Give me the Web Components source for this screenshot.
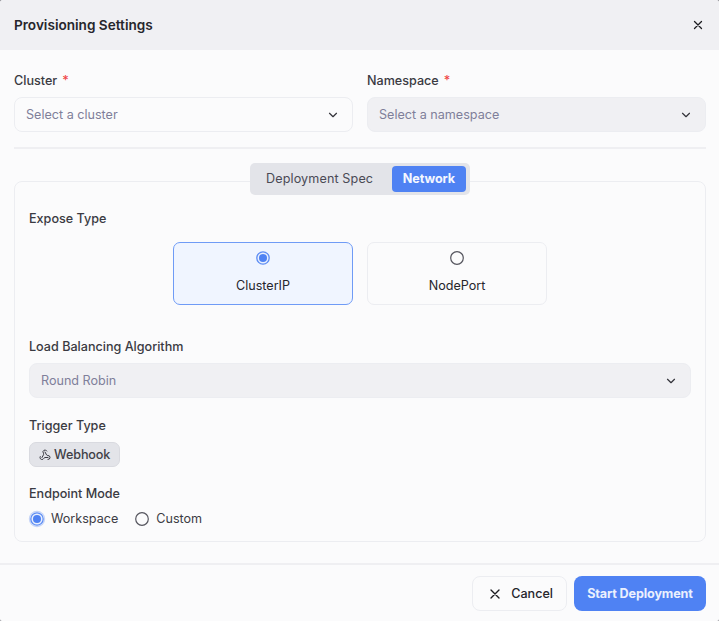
<!DOCTYPE html>
<html>
<head>
<meta charset="utf-8">
<title>Provisioning Settings</title>
<style>
    html, body { margin: 0; padding: 0; background: #8f8f94; }
    body { font-family: Inter, "Liberation Sans", sans-serif; color: #26262c; width: 719px; height: 621px; overflow: hidden; }
</style>
</head>
<body>
<prov-dialog heading="Provisioning Settings">
    <div slot="top" style="display:grid;grid-template-columns:339px 339px;column-gap:14px">
        <prov-select label="Cluster" required placeholder="Select a cluster"></prov-select>
        <prov-select label="Namespace" required disabled placeholder="Select a namespace"></prov-select>
    </div>
    <prov-tabs>
        <prov-field label="Expose Type" gap="15" style="margin-bottom:33px">
            <div style="display:flex;justify-content:center;gap:14px">
                <prov-option-card label="ClusterIP" checked></prov-option-card>
                <prov-option-card label="NodePort"></prov-option-card>
            </div>
        </prov-field>
        <prov-select label="Load Balancing Algorithm" disabled value="Round Robin" style="margin-bottom:19px"></prov-select>
        <prov-field label="Trigger Type" gap="8" style="margin-bottom:18px">
            <prov-chip>Webhook</prov-chip>
        </prov-field>
        <prov-field label="Endpoint Mode" gap="9">
            <div style="display:flex;gap:16px">
                <prov-radio label="Workspace" checked></prov-radio>
                <prov-radio label="Custom"></prov-radio>
            </div>
        </prov-field>
    </prov-tabs>
    <prov-button slot="footer" icon>Cancel</prov-button>
    <prov-button slot="footer" primary>Start Deployment</prov-button>
</prov-dialog>

<script>
// Provisioning dialog components

const X_ICON = '<path d="M18 6 6 18M6 6l12 12"/>';
const CHEVRON_ICON = '<path d="m6 9 6 6 6-6"/>';

class ProvDialog extends HTMLElement {
    constructor() {
        super();
        this.attachShadow({ mode: 'open' });
    }

    connectedCallback() {
        this.shadowRoot.innerHTML = `
            <style>
                :host { display: flex; flex-direction: column; width: 719px; height: 621px; background: #fbfbfc; border-radius: 3px 3px 2px 2px; overflow: hidden; }
                header { height: 50px; flex: none; box-sizing: border-box; padding: 0 14px; background: #f0f0f3; display: flex; align-items: center; justify-content: space-between; }
                h2 { margin: 0; font-size: 13.6px; font-weight: 600; color: #26262c; line-height: 50px; }
                header svg { width: 14px; height: 14px; fill: none; stroke: #1c1c20; stroke-width: 2.2; stroke-linecap: round; stroke-linejoin: round; }
                .body { flex: 1; box-sizing: border-box; padding: 22px 13px 0 14px; }
                .top { padding-bottom: 15px; border-bottom: 2px solid #efeff2; margin-bottom: 14px; }
                footer { height: 58px; flex: none; box-sizing: border-box; border-top: 2px solid #efeff2; padding: 11px 13px 0; display: flex; justify-content: flex-end; gap: 7px; }
            </style>
            <header>
                <h2>${this.getAttribute('heading')}</h2>
                <svg viewBox="0 0 24 24">${X_ICON}</svg>
            </header>
            <div class="body">
                <div class="top"><slot name="top"></slot></div>
                <slot></slot>
            </div>
            <footer><slot name="footer"></slot></footer>
        `;
    }
}

class ProvField extends HTMLElement {
    constructor() {
        super();
        this.attachShadow({ mode: 'open' });
    }

    connectedCallback() {
        const gap = this.getAttribute('gap') || '8';
        this.shadowRoot.innerHTML = `
            <style>
                :host { display: block; }
                label { display: block; font-size: 12.6px; font-weight: 500; line-height: 16px; padding-top: 1px; color: #3a3a42; margin-bottom: ${gap}px; }
            </style>
            <label>${this.getAttribute('label')}</label>
            <slot></slot>
        `;
    }
}

class ProvSelect extends HTMLElement {
    constructor() {
        super();
        this.attachShadow({ mode: 'open' });
    }

    connectedCallback() {
        const disabled = this.hasAttribute('disabled');
        const star = this.hasAttribute('required') ? '<span class="req">*</span>' : '';
        this.shadowRoot.innerHTML = `
            <style>
                :host { display: block; }
                label { display: block; font-size: 12.6px; font-weight: 500; line-height: 16px; padding-top: 1px; color: #3a3a42; margin-bottom: 8px; }
                .req { color: #ef4444; margin-left: 5px; }
                .box { height: 35px; box-sizing: border-box; border: 1.5px solid #ecedf1; border-radius: 8px; padding: 0 11px; display: flex; align-items: center; justify-content: space-between; background: ${disabled ? '#f0f0f3' : '#fbfbfc'}; font-size: 12.6px; color: #7f7f9a; }
                svg { width: 14px; height: 14px; fill: none; stroke: #33333a; stroke-width: 2; stroke-linecap: round; stroke-linejoin: round; margin-right: 1px; }
            </style>
            <label>${this.getAttribute('label')}${star}</label>
            <div class="box">
                <span>${this.getAttribute('placeholder') || this.getAttribute('value')}</span>
                <svg viewBox="0 0 24 24">${CHEVRON_ICON}</svg>
            </div>
        `;
    }
}

class ProvTabs extends HTMLElement {
    constructor() {
        super();
        this.attachShadow({ mode: 'open' });
    }

    connectedCallback() {
        this.shadowRoot.innerHTML = `
            <style>
                :host { display: block; }
                .bar { display: flex; justify-content: center; position: relative; z-index: 1; height: 32px; margin-bottom: -14px; }
                .tabs { display: flex; align-items: center; justify-content: space-between; box-sizing: border-box; width: 220px; height: 32px; padding: 3px 4px 3px 16px; background: #e3e4e9; border-radius: 5px; font-size: 12.6px; }
                .tab { height: 26px; line-height: 26px; color: #4a4a55; letter-spacing: 0.12px; }
                .tab.on { background: #4f82f3; color: #f4f7ff; border-radius: 4px; font-weight: 700; letter-spacing: -0.1px; padding: 0 11px; }
                .panel { border: 1.5px solid #ecedf1; border-radius: 8px; box-sizing: border-box; height: 361px; padding: 28px 14px 0; }
            </style>
            <div class="bar">
                <div class="tabs">
                    <div class="tab">Deployment Spec</div>
                    <div class="tab on">Network</div>
                </div>
            </div>
            <div class="panel"><slot></slot></div>
        `;
    }
}

class ProvOptionCard extends HTMLElement {
    constructor() {
        super();
        this.attachShadow({ mode: 'open' });
    }

    connectedCallback() {
        const checked = this.hasAttribute('checked');
        this.shadowRoot.innerHTML = `
            <style>
                :host { display: block; }
                .card { width: 180px; height: 63px; box-sizing: border-box; border: 1.5px solid ${checked ? '#6f9bf6' : '#ecedf1'}; border-radius: 7px; background: ${checked ? '#f0f5ff' : '#fbfbfc'}; display: flex; flex-direction: column; align-items: center; padding-top: 8px; font-size: 12.6px; color: #26262c; }
                prov-dot { margin-bottom: 13px; }
            </style>
            <div class="card">
                <prov-dot ${checked ? 'checked' : ''}></prov-dot>
                <span>${this.getAttribute('label')}</span>
            </div>
        `;
    }
}

class ProvDot extends HTMLElement {
    constructor() {
        super();
        this.attachShadow({ mode: 'open' });
    }

    connectedCallback() {
        const checked = this.hasAttribute('checked');
        this.shadowRoot.innerHTML = `
            <style>
                :host { display: block; width: 14px; height: 14px; }
                svg { display: block; }
            </style>
            <svg width="14" height="14" viewBox="0 0 14 14">
                ${checked
                    ? '<circle cx="7" cy="7" r="6.2" fill="#e9effd" stroke="#5c8cf4" stroke-width="1.3"/><circle cx="7" cy="7" r="4" fill="#4f82f3"/>'
                    : '<circle cx="7" cy="7" r="6.3" fill="#fbfbfc" stroke="#55555e" stroke-width="1.2"/>'}
            </svg>
        `;
    }
}

class ProvRadio extends HTMLElement {
    constructor() {
        super();
        this.attachShadow({ mode: 'open' });
    }

    connectedCallback() {
        const checked = this.hasAttribute('checked');
        this.shadowRoot.innerHTML = `
            <style>
                :host { display: block; }
                .row { display: flex; align-items: center; gap: 7px; font-size: 12.6px; color: #3c3c44; line-height: 16px; }
                prov-dot { margin-left: 1px; border-radius: 50%; ${checked ? 'box-shadow: 0 0 0 1.2px #c6d5f7;' : ''} }
            </style>
            <div class="row">
                <prov-dot ${checked ? 'checked' : ''}></prov-dot>
                <span>${this.getAttribute('label')}</span>
            </div>
        `;
    }
}

class ProvChip extends HTMLElement {
    constructor() {
        super();
        this.attachShadow({ mode: 'open' });
    }

    connectedCallback() {
        this.shadowRoot.innerHTML = `
            <style>
                :host { display: inline-flex; }
                .chip { display: flex; align-items: center; gap: 3px; width: 91px; height: 25px; box-sizing: border-box; padding: 0 0 0 9px; background: #e3e4e9; border: 1.5px solid #d9dae0; border-radius: 7px; font-size: 12.6px; font-weight: 500; letter-spacing: -0.1px; color: #3f3f47; }
                svg { width: 12px; height: 12px; fill: none; stroke: #3a3a42; stroke-width: 2; stroke-linecap: round; stroke-linejoin: round; }
            </style>
            <div class="chip">
                <svg viewBox="0 0 24 24">
                    <path d="M18 16.98h-5.99c-1.1 0-1.95.94-2.48 1.9A4 4 0 0 1 2 17c.01-.7.2-1.4.57-2"/>
                    <path d="m6 17 3.13-5.78c.53-.97.1-2.18-.5-3.1a4 4 0 1 1 6.89-4.06"/>
                    <path d="m12 6 3.13 5.73C15.66 12.7 16.9 13 18 13a4 4 0 0 1 0 8"/>
                </svg>
                <span><slot></slot></span>
            </div>
        `;
    }
}

class ProvButton extends HTMLElement {
    constructor() {
        super();
        this.attachShadow({ mode: 'open' });
    }

    connectedCallback() {
        const primary = this.hasAttribute('primary');
        const icon = this.hasAttribute('icon') ? `<svg viewBox="0 0 24 24">${X_ICON}</svg>` : '';
        this.shadowRoot.innerHTML = `
            <style>
                :host { display: block; }
                button { font: inherit; height: 35px; box-sizing: border-box; border-radius: 8px; font-size: 12.6px; display: flex; align-items: center; margin: 0;
                    ${primary
                        ? 'background:#4f82f3;border:none;color:#eaf0fe;font-weight:700;letter-spacing:-0.13px;width:132px;justify-content:center;padding:0;'
                        : 'background:#fbfbfc;border:1.5px solid #ecedf1;color:#26262c;font-weight:500;padding:0 13px 0 14px;gap:8px;'} }
                svg { width: 16px; height: 16px; fill: none; stroke: #1c1c20; stroke-width: 2; stroke-linecap: round; stroke-linejoin: round; }
            </style>
            <button>${icon}<slot></slot></button>
        `;
    }
}

customElements.define('prov-dot', ProvDot);
customElements.define('prov-dialog', ProvDialog);
customElements.define('prov-field', ProvField);
customElements.define('prov-select', ProvSelect);
customElements.define('prov-tabs', ProvTabs);
customElements.define('prov-option-card', ProvOptionCard);
customElements.define('prov-radio', ProvRadio);
customElements.define('prov-chip', ProvChip);
customElements.define('prov-button', ProvButton);
</script>
</body>
</html>
